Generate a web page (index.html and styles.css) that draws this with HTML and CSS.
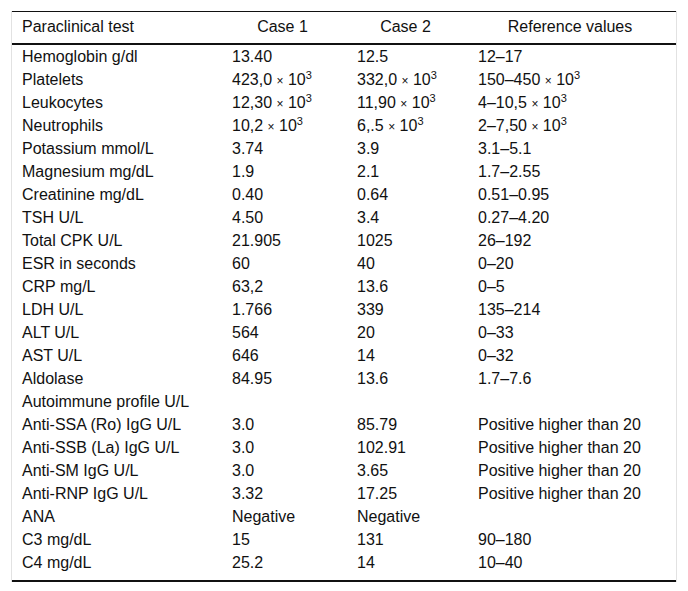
FILE: index.html
```html
<!DOCTYPE html>
<html>
<head>
<meta charset="utf-8">
<link rel="stylesheet" href="styles.css">
</head>
<body>
<div class="frame">
<table class="lab">
<colgroup>
<col class="c1"><col class="c2"><col class="c3"><col class="c4">
</colgroup>
<thead>
<tr><th class="first">Paraclinical test</th><th>Case 1</th><th>Case 2</th><th>Reference values</th></tr>
</thead>
<tbody>
<tr><td>Hemoglobin g/dl</td><td>13.40</td><td>12.5</td><td>12–17</td></tr>
<tr><td>Platelets</td><td>423,0 <span class="x">×</span> 10<sup>3</sup></td><td>332,0 <span class="x">×</span> 10<sup>3</sup></td><td>150–450 <span class="x">×</span> 10<sup>3</sup></td></tr>
<tr><td>Leukocytes</td><td>12,30 <span class="x">×</span> 10<sup>3</sup></td><td>11,90 <span class="x">×</span> 10<sup>3</sup></td><td>4–10,5 <span class="x">×</span> 10<sup>3</sup></td></tr>
<tr><td>Neutrophils</td><td>10,2 <span class="x">×</span> 10<sup>3</sup></td><td>6,.5 <span class="x">×</span> 10<sup>3</sup></td><td>2–7,50 <span class="x">×</span> 10<sup>3</sup></td></tr>
<tr><td>Potassium mmol/L</td><td>3.74</td><td>3.9</td><td>3.1–5.1</td></tr>
<tr><td>Magnesium mg/dL</td><td>1.9</td><td>2.1</td><td>1.7–2.55</td></tr>
<tr><td>Creatinine mg/dL</td><td>0.40</td><td>0.64</td><td>0.51–0.95</td></tr>
<tr><td>TSH U/L</td><td>4.50</td><td>3.4</td><td>0.27–4.20</td></tr>
<tr><td>Total CPK U/L</td><td>21.905</td><td>1025</td><td>26–192</td></tr>
<tr><td>ESR in seconds</td><td>60</td><td>40</td><td>0–20</td></tr>
<tr><td>CRP mg/L</td><td>63,2</td><td>13.6</td><td>0–5</td></tr>
<tr><td>LDH U/L</td><td>1.766</td><td>339</td><td>135–214</td></tr>
<tr><td>ALT U/L</td><td>564</td><td>20</td><td>0–33</td></tr>
<tr><td>AST U/L</td><td>646</td><td>14</td><td>0–32</td></tr>
<tr><td>Aldolase</td><td>84.95</td><td>13.6</td><td>1.7–7.6</td></tr>
<tr><td>Autoimmune profile U/L</td><td></td><td></td><td></td></tr>
<tr><td>Anti-SSA (Ro) IgG U/L</td><td>3.0</td><td>85.79</td><td>Positive higher than 20</td></tr>
<tr><td>Anti-SSB (La) IgG U/L</td><td>3.0</td><td>102.91</td><td>Positive higher than 20</td></tr>
<tr><td>Anti-SM IgG U/L</td><td>3.0</td><td>3.65</td><td>Positive higher than 20</td></tr>
<tr><td>Anti-RNP IgG U/L</td><td>3.32</td><td>17.25</td><td>Positive higher than 20</td></tr>
<tr><td>ANA</td><td>Negative</td><td>Negative</td><td></td></tr>
<tr><td>C3 mg/dL</td><td>15</td><td>131</td><td>90–180</td></tr>
<tr class="last"><td>C4 mg/dL</td><td>25.2</td><td>14</td><td>10–40</td></tr>
</tbody>
</table>
</div>
</body>
</html>
```
FILE: styles.css
```css
html, body {
  margin: 0;
  padding: 0;
  background: #fff;
}
body {
  padding: 11px 11px 0 11px;
  font-family: "Liberation Sans", Arial, sans-serif;
  font-size: 16px;
  color: #111;
}
.frame {
  width: 664px;
  border-left: 1px solid #e2e2e2;
  border-right: 1px solid #e2e2e2;
}
.lab {
  width: 664px;
  border-collapse: collapse;
  table-layout: fixed;
  border-top: 1px solid #111;
  border-bottom: 2px solid #111;
}
.c1 { width: 210px; }
.c2 { width: 125px; }
.c3 { width: 121px; }
.c4 { width: 208px; }
.lab th, .lab td {
  height: 18px;
  line-height: 18px;
  padding: 3px 14px 2px 10px;
  text-align: left;
  vertical-align: top;
  white-space: nowrap;
}
.lab th {
  font-weight: normal;
  text-align: center;
  padding-top: 6px;
  padding-bottom: 7px;
  border-bottom: 2px solid #111;
}
.lab th.first {
  text-align: left;
}
.lab tr.last td {
  padding-bottom: 8px;
}
.x {
  font-size: 12px;
  line-height: 0;
}
sup {
  font-size: 11px;
  line-height: 0;
  vertical-align: 6px;
}
```
